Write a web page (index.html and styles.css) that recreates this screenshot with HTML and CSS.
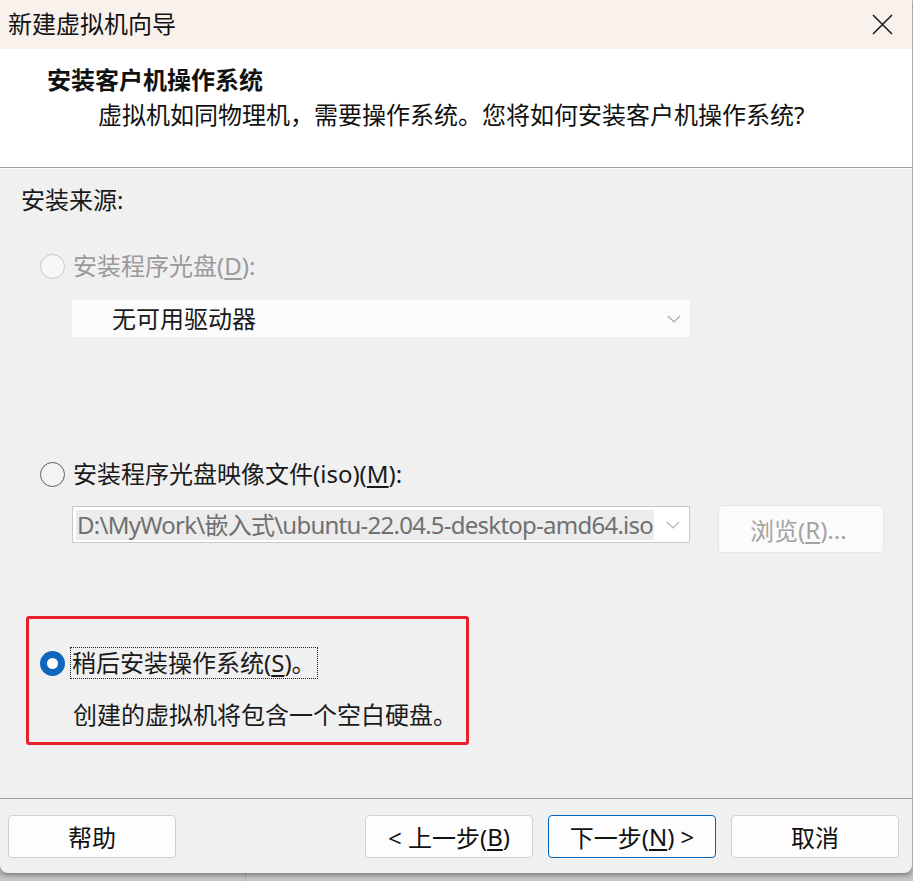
FILE: index.html
```html
<!DOCTYPE html>
<html lang="zh-CN">
<head>
<meta charset="utf-8">
<title>新建虚拟机向导</title>
<link rel="stylesheet" href="styles.css">
</head>
<body>
<div class="window">
  <div class="titlebar">
    <span class="title">新建虚拟机向导</span>
    <svg class="close" width="21" height="21" viewBox="0 0 21 21"><path d="M1 1 L20 20 M20 1 L1 20" stroke="#1c1c1c" stroke-width="1.6" fill="none"/></svg>
  </div>
  <div class="header">
    <div class="h-title">安装客户机操作系统</div>
    <div class="h-sub">虚拟机如同物理机，需要操作系统。您将如何安装客户机操作系统?</div>
  </div>
  <div class="content">
    <div class="label">安装来源:</div>
    <div class="option opt1 disabled">
      <span class="radio radio-disabled"></span>
      <span class="opt-text">安装程序光盘(<u>D</u>):</span>
    </div>
    <div class="combo combo1">
      <span class="combo-text">无可用驱动器</span>
      <svg class="chev" width="14" height="8" viewBox="0 0 14 8"><path d="M1 1 L7 7 L13 1" stroke="#a8a8a8" stroke-width="1.2" fill="none"/></svg>
    </div>
    <div class="option opt2">
      <span class="radio radio-off"></span>
      <span class="opt-text">安装程序光盘映像文件(iso)(<u>M</u>):</span>
    </div>
    <div class="iso-row">
      <div class="combo combo2">
        <span class="combo-text2">D:\MyWork\嵌入式\ubuntu-22.04.5-desktop-amd64.iso</span>
        <svg class="chev" width="14" height="8" viewBox="0 0 14 8"><path d="M1 1 L7 7 L13 1" stroke="#b4b4b4" stroke-width="1.2" fill="none"/></svg>
      </div>
      <div class="browse">浏览(<u>R</u>)...</div>
    </div>
    <div class="redbox">
      <div class="option opt3">
        <span class="radio radio-on"></span>
        <span class="opt-text focus">稍后安装操作系统(<u>S</u>)。</span>
      </div>
      <div class="desc">创建的虚拟机将包含一个空白硬盘。</div>
    </div>
  </div>
  <div class="footer">
    <div class="btn">帮助</div>
    <div class="spacer"></div>
    <div class="btn">&lt; 上一步(<u>B</u>)</div>
    <div class="btn primary">下一步(<u>N</u>) &gt;</div>
    <div class="btn">取消</div>
  </div>
</div>
<div class="below"><div class="below-line"></div></div>
</body>
</html>
```

FILE: styles.css
```css
* { box-sizing: border-box; }
html, body { margin: 0; padding: 0; }
body {
  width: 913px;
  height: 881px;
  overflow: hidden;
  background: #c4c4c4;
  font-family: "Noto Sans", "Noto Sans CJK SC", sans-serif;
  font-size: 24px;
  color: #1a1a1a;
}
u { text-decoration: underline; text-underline-offset: 3px; text-decoration-thickness: 1.5px; }
.window {
  width: 912px;
  height: 873px;
  background: #f0f0f0;
  border-radius: 0 0 8px 8px;
  box-shadow: 0 2px 4px rgba(0,0,0,0.35);
  display: flex;
  flex-direction: column;
  position: relative;
  z-index: 1;
  overflow: hidden;
}
.titlebar {
  height: 49px;
  background: #f8f1ec;
  display: flex;
  align-items: center;
  justify-content: space-between;
  padding: 0 19px 2px 8px;
}
.title { font-size: 24px; line-height: 30px; color: #111; }
.close { display: block; margin-top: 1px; }
.header {
  height: 119px;
  background: #ffffff;
  border-bottom: 1px solid #a0a0a0;
  padding: 0 0 0 47px;
}
.h-title {
  margin-top: 16px;
  font-weight: bold;
  font-size: 24px;
  line-height: 30px;
  color: #111;
}
.h-sub {
  margin-top: 5px;
  margin-left: 51px;
  font-size: 24px;
  line-height: 30px;
  color: #111;
}
.content {
  flex: 1;
  border-top: 1px solid #ffffff;
  padding: 16px 0 0 21px;
}
.label { line-height: 30px; }
.option { display: flex; align-items: center; height: 30px; }
.opt1 { margin-top: 36px; margin-left: 19px; }
.disabled .opt-text { color: #9a9a9a; }
.radio {
  width: 25px; height: 25px; border-radius: 50%;
  flex: none;
  margin-right: 8px;
}
.radio-disabled { border: 1.5px solid #c6c6c6; background: #f7f7f7; }
.radio-off { border: 1.5px solid #5f5f5f; background: #f3f3f3; }
.radio-on {
  background: #0f67bd;
  position: relative;
}
.radio-on::after {
  content: "";
  position: absolute;
  left: 7px; top: 7px;
  width: 11px; height: 11px;
  border-radius: 50%;
  background: #ffffff;
}
.opt-text { line-height: 30px; white-space: nowrap; }
.combo {
  display: flex;
  align-items: center;
  justify-content: space-between;
  width: 618px;
  height: 37px;
}
.combo1 {
  margin: 19px 0 0 51px;
  background: #fbfbfb;
  padding: 0 9px 0 40px;
}
.combo-text { line-height: 30px; }
.opt2 { margin-top: 122px; margin-left: 19px; }
.iso-row {
  display: flex;
  align-items: flex-start;
  margin: 16px 0 0 51px;
}
.combo2 {
  margin-top: 1px;
  height: 37px;
  background: #ffffff;
  border: 1px solid #c9c9c9;
  padding: 0 9px 0 3px;
}
.combo-text2 {
  width: 578px;
  overflow: hidden;
  white-space: nowrap;
  color: #707070;
  background: #ececec;
  line-height: 30px;
  padding-left: 1px;
  letter-spacing: -0.75px;
}
.browse {
  margin-left: 28px;
  width: 166px;
  height: 48px;
  border: 1px solid #e6e6e6;
  border-radius: 4px;
  background: #fbfbfb;
  color: #a3a3a3;
  display: flex;
  align-items: center;
  padding-left: 31px;
}
.redbox {
  margin: 63px 0 0 5px;
  width: 443px;
  height: 129px;
  border: 3px solid #e8202a;
  border-radius: 3px;
  padding: 29px 0 0 11px;
}
.opt3 { margin: 0; }
.focus {
  outline: 1px dotted #222;
  outline-offset: 0;
  padding: 0 1px;
  margin-left: -2px;
}
.desc { margin-top: 22px; margin-left: 33px; line-height: 30px; }
.footer {
  height: 75px;
  border-top: 1px solid #a2a2a2;
  display: flex;
  align-items: flex-start;
  padding: 16px 13px 0 8px;
  gap: 15px;
}
.spacer { flex: 1; }
.btn {
  width: 168px;
  height: 43px;
  background: #fdfdfd;
  border: 1px solid #d0d0d0;
  border-radius: 4px;
  display: flex;
  align-items: center;
  justify-content: center;
  font-size: 24px;
  color: #111;
  white-space: nowrap;
}
.btn.primary { border-color: #0067c0; }
.below {
  height: 8px;
  background: linear-gradient(#b8b8b8, #c8c8c8);
  position: relative;
}
.below-line {
  position: absolute;
  left: 245px; top: 0;
  width: 1px; height: 8px;
  background: #a8a8a8;
}
```
